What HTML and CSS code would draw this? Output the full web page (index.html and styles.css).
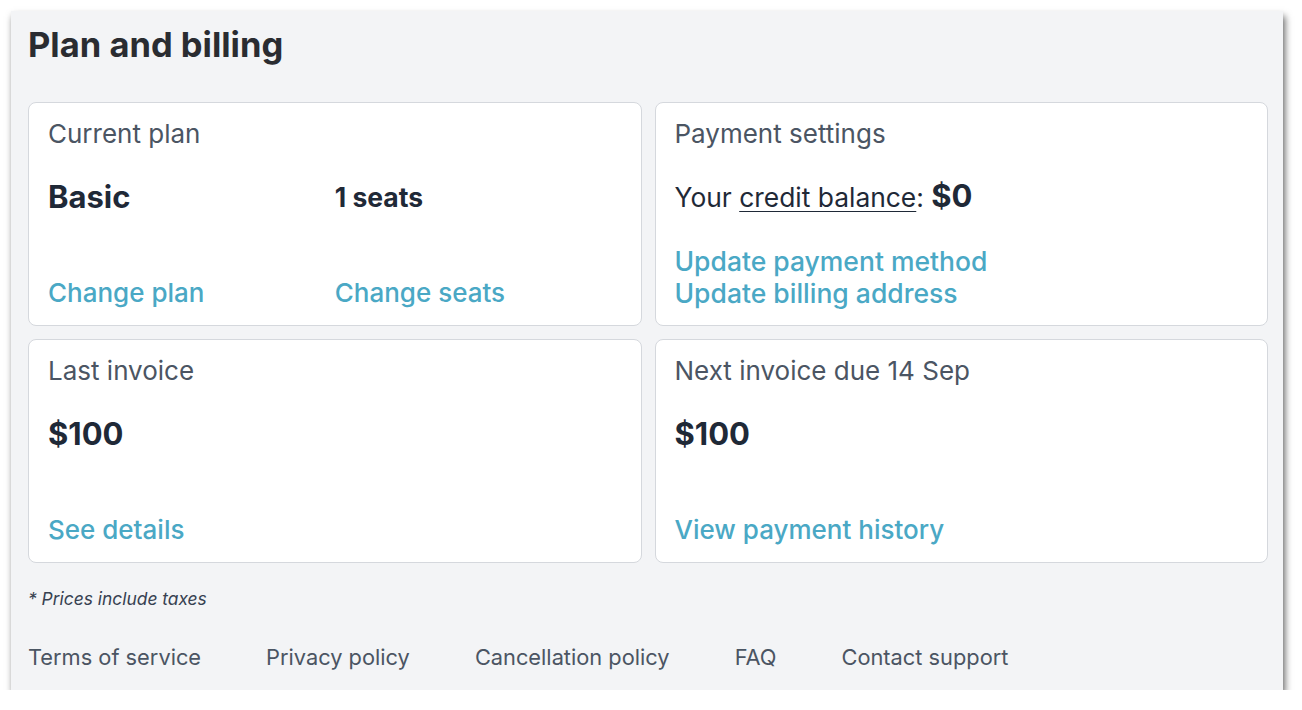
FILE: index.html
```html
<!DOCTYPE html>
<html lang="en">
<head>
<meta charset="utf-8">
<title>Plan and billing</title>
<link rel="stylesheet" href="styles.css">
</head>
<body>
<div class="panel">
  <h1 class="title">Plan and billing</h1>
  <div class="grid">
    <section class="card">
      <div class="card-title">Current plan</div>
      <div class="two">
        <div class="value">Basic</div>
        <div class="value small">1 seats</div>
      </div>
      <div class="links two">
        <a class="link" href="#">Change plan</a>
        <a class="link" href="#">Change seats</a>
      </div>
    </section>
    <section class="card">
      <div class="card-title">Payment settings</div>
      <div class="balance">Your <span class="u">credit balance</span>: <b class="inline">$0</b></div>
      <div class="links stack">
        <a class="link" href="#">Update payment method</a>
        <a class="link" href="#">Update billing address</a>
      </div>
    </section>
    <section class="card">
      <div class="card-title">Last invoice</div>
      <div class="value">$100</div>
      <div class="links">
        <a class="link" href="#">See details</a>
      </div>
    </section>
    <section class="card">
      <div class="card-title">Next invoice due 14 Sep</div>
      <div class="value">$100</div>
      <div class="links">
        <a class="link" href="#">View payment history</a>
      </div>
    </section>
  </div>
  <p class="note">* Prices include taxes</p>
  <nav class="footer">
    <a href="#">Terms of service</a>
    <a href="#">Privacy policy</a>
    <a href="#">Cancellation policy</a>
    <a href="#">FAQ</a>
    <a href="#">Contact support</a>
  </nav>
</div>
</body>
</html>
```
FILE: styles.css
```css
html, body {
  margin: 0;
  padding: 0;
  background: #ffffff;
}
body {
  font-family: Inter, "Noto Sans", sans-serif;
  color: #1f2937;
}
.panel {
  box-sizing: border-box;
  margin: 11px 0 0 11px;
  width: 1272px;
  height: 679px;
  background: #f3f4f6;
  padding: 0 15px 0 17px;
  box-shadow: 2px 5px 7px rgba(0, 0, 0, 0.6);
  display: flex;
  flex-direction: column;
}
.title {
  margin: 16px 0 0;
  font-size: 34.5px;
  line-height: 36px;
  font-weight: 700;
  color: #2a2c31;
}
.grid {
  margin-top: 39px;
  display: grid;
  grid-template-columns: 1fr 1fr;
  grid-auto-rows: 1fr;
  column-gap: 13px;
  row-gap: 13px;
}
.card {
  background: #ffffff;
  border: 1px solid #d5d8dd;
  border-radius: 8px;
  padding: 15px 19px 16px;
  display: flex;
  flex-direction: column;
  font-size: 26px;
  line-height: 32px;
}
.card-title {
  color: #4b5563;
}
.two {
  display: grid;
  grid-template-columns: 1fr 1fr;
  align-items: center;
}
.value {
  margin-top: 31px;
  font-weight: 700;
  font-size: 31px;
  color: #1f2937;
}
.value.small {
  font-size: 26.5px;
}
.inline {
  font-weight: 700;
  font-size: 31px;
  line-height: 0;
  color: #1f2937;
}
.balance {
  margin-top: 31px;
  height: 32px;
  font-size: 26.4px;
  color: #1f2937;
}
.u {
  text-decoration: underline;
  text-underline-offset: 4px;
  text-decoration-thickness: 1px;
}
.links {
  margin-top: auto;
  padding-top: 32px;
}
.stack {
  display: flex;
  flex-direction: column;
}
.link {
  color: #4aa8c5;
  text-decoration: none;
  font-weight: 500;
}
.stack .link {
  font-size: 26.5px;
}
.note {
  margin: 24px 0 0;
  font-size: 17.4px;
  line-height: 24px;
  font-style: italic;
  color: #374151;
}
.footer {
  margin-top: 32px;
  display: flex;
  gap: 65px;
  font-size: 21.8px;
  line-height: 28px;
}
.footer a {
  color: #4b5563;
  text-decoration: none;
}
```
